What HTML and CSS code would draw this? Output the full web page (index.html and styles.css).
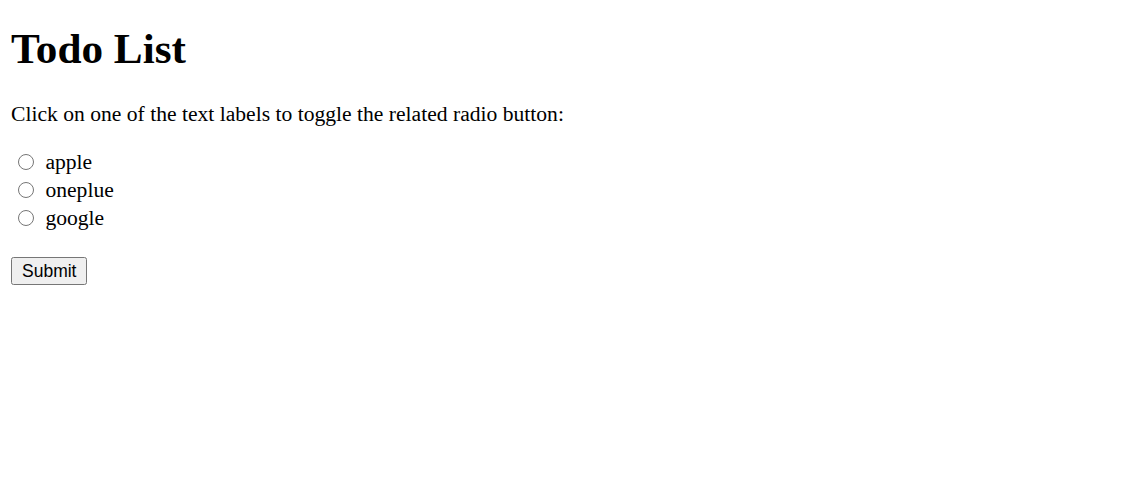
FILE: index.html
```html
<!DOCTYPE html>
<html>
<head>
<meta charset="utf-8">
<title>Todo List</title>
<link rel="stylesheet" href="styles.css">
</head>
<body class="page">
<h1 class="title">Todo List</h1>
<p class="intro">Click on one of the text labels to toggle the related radio button:</p>
<form class="todo-form">
  <div class="option"><input class="radio" type="radio" id="apple" name="brand" value="apple"> <label for="apple">apple</label></div>
  <div class="option"><input class="radio" type="radio" id="oneplue" name="brand" value="oneplue"> <label for="oneplue">oneplue</label></div>
  <div class="option"><input class="radio" type="radio" id="google" name="brand" value="google"> <label for="google">google</label></div>
  <div class="actions"><input class="submit" type="submit" value="Submit"></div>
</form>
</body>
</html>
```
FILE: styles.css
```css
html, body {
  background: #ffffff;
}
.page {
  margin: 0;
  padding: 0 11px;
  font-family: "Liberation Serif", "Times New Roman", serif;
  font-size: 21.6px;
  color: #000;
}
.title {
  font-size: 43.2px;
  font-weight: bold;
  line-height: 50px;
  margin: 24px 0 28px;
}
.intro {
  line-height: 25px;
  margin: 0 0 21px;
}
.option {
  line-height: 28px;
  height: 28px;
}
.radio {
  width: 16px;
  height: 16px;
  margin: 0 6px 0 7px;
  vertical-align: -1px;
}
.actions {
  margin-top: 25px;
}
.submit {
  font-family: "Liberation Sans", Arial, sans-serif;
  font-size: 17.5px;
  padding: 1px 9px;
  height: 28px;
}
```
